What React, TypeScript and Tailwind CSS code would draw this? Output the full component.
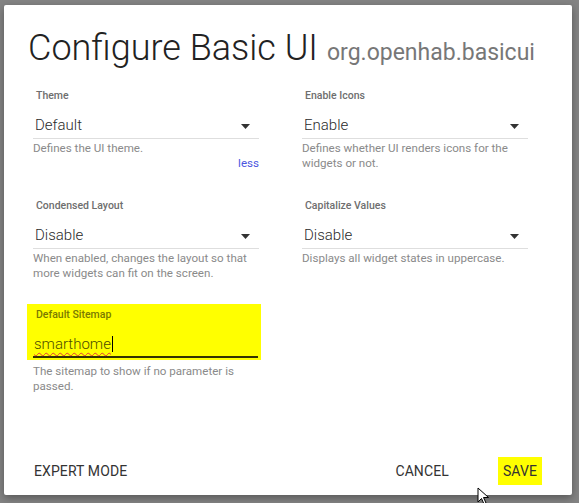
import React from "react";

interface FieldProps {
  label: string;
  value: string;
  help: string;
  less?: boolean;
}

const Arrow = () => (
  <svg width="9" height="5" viewBox="0 0 9 5" className="mr-[9px] mt-[3px]">
    <path d="M0 0 L9 0 L4.5 5 Z" fill="#333" />
  </svg>
);

const SelectField: React.FC<FieldProps> = ({ label, value, help, less }) => (
  <div className="h-[110px] flex flex-col">
    <div className="pl-[3px] text-[10.5px] leading-[16px] font-medium text-[#6e6e6e]">
      {label}
    </div>
    <div className="mt-[11px] flex items-center justify-between h-[24px] pb-[3px] border-b border-[#dedede]">
      <span className="pl-[2px] text-[15px] leading-[20px] font-light text-[#2a2a2a]">{value}</span>
      <Arrow />
    </div>
    <div className="mt-[2px] text-[11.6px] leading-[15px] text-[#8a8a8a]">{help}</div>
    {less && (
      <div className="text-right text-[11.6px] leading-[15px] text-[#4a55e0]">less</div>
    )}
  </div>
);

export default function App() {
  return (
    <div
      className="relative w-[579px] h-[503px] bg-[#848484] pl-[4px] pt-[5px] overflow-hidden"
      style={{ fontFamily: "Roboto, 'Liberation Sans', sans-serif" }}
    >
      <div className="w-[568px] h-[490px] bg-white rounded-[2px] shadow-[0_3px_8px_rgba(0,0,0,0.35)] flex flex-col">
        {/* Title */}
        <div className="mt-[23px] pl-[24px] flex items-baseline gap-[9px]">
          <h1 className="text-[36px] leading-[41px] font-light text-[#222]">Configure Basic UI</h1>
          <span className="text-[23px] text-[#777]">org.openhab.basicui</span>
        </div>

        {/* Fields */}
        <div className="mt-[17px] pl-[29px] grid grid-cols-[226px_226px] gap-x-[43px]">
          <SelectField label="Theme" value="Default" help="Defines the UI theme." less />
          <SelectField
            label="Enable Icons"
            value="Enable"
            help="Defines whether UI renders icons for the widgets or not."
          />
          <SelectField
            label="Condensed Layout"
            value="Disable"
            help="When enabled, changes the layout so that more widgets can fit on the screen."
          />
          <SelectField
            label="Capitalize Values"
            value="Disable"
            help="Displays all widget states in uppercase."
          />

          <div className="flex flex-col">
            <div className="-mt-[4px] -ml-[6px] w-[234px] bg-[#ffff00] pt-[3px] pl-[6px] pr-[3px] pb-[2px]">
              <div className="pl-[3px] text-[10.5px] leading-[16px] font-medium text-[#7a7a00]">
                Default Sitemap
              </div>
              <div className="mt-[11px] h-[24px] pb-[2px] border-b-2 border-[#333300] flex items-center">
                <span className="pl-[1px] text-[15px] leading-[20px] font-light text-[#4d4d00] underline decoration-wavy decoration-[#e53935] decoration-1 underline-offset-[3px]">
                  smarthome
                </span>
                <span className="ml-[1px] w-[1px] h-[16px] bg-black" />
              </div>
            </div>
            <div className="mt-[4px] text-[11.6px] leading-[15px] text-[#8a8a8a]">
              The sitemap to show if no parameter is passed.
            </div>
          </div>
        </div>

        {/* Footer */}
        <div className="mt-auto mb-[10px] pl-[30px] pr-[30px] flex items-center justify-between">
          <button className="text-[14px] leading-[20px] tracking-[0.1px] text-[#333] uppercase">
            Expert Mode
          </button>
          <div className="flex items-center">
            <button className="text-[14px] leading-[20px] tracking-[0.1px] text-[#333] uppercase">
              Cancel
            </button>
            <button className="ml-[49px] h-[28px] px-[5px] bg-[#ffff00] text-[14px] leading-[20px] tracking-[0.1px] text-[#333] uppercase">
              Save
            </button>
          </div>
        </div>
      </div>

      {/* mouse pointer */}
      <svg
        className="absolute left-[477px] top-[487px]"
        width="13"
        height="18"
        viewBox="0 0 13 18"
      >
        <path
          d="M1 1 L1 15 L4.5 11.5 L7 17 L9 16 L6.5 10.5 L11.5 10.5 Z"
          fill="#fff"
          stroke="#000"
          strokeWidth="1"
        />
      </svg>
    </div>
  );
}
